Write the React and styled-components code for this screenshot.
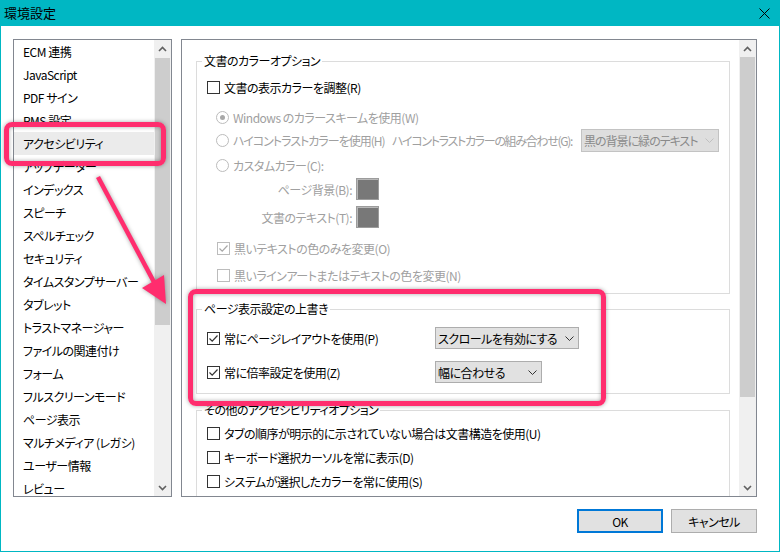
import React from 'react';
import styled, { createGlobalStyle } from 'styled-components';

const GlobalStyle = createGlobalStyle`
  html, body { margin: 0; padding: 0; background: #fff; }
  body {
    font-family: "Noto Sans CJK JP", "Noto Sans", sans-serif;
    font-size: 12px;
    font-feature-settings: "palt";
    letter-spacing: -0.5px;
    color: #000;
  }
  * { box-sizing: border-box; }
`;

const categories = [
  'ECM 連携', 'JavaScript', 'PDF サイン', 'RMS 設定', 'アクセシビリティ',
  'アップデーター', 'インデックス', 'スピーチ', 'スペルチェック', 'セキュリティ',
  'タイムスタンプサーバー', 'タブレット', 'トラストマネージャー', 'ファイルの関連付け',
  'フォーム', 'フルスクリーンモード', 'ページ表示', 'マルチメディア (レガシ)',
  'ユーザー情報', 'レビュー',
];

const Window = styled.div`
  position: relative;
  width: 780px;
  height: 552px;
  border: 1px solid #00b7c3;
  border-top: none;
  background: #fff;
  display: flex;
  flex-direction: column;
  overflow: hidden;
`;

const TitleBar = styled.div`
  height: 26px;
  flex: none;
  background: #00b7c3;
  display: flex;
  align-items: center;
  justify-content: space-between;
  padding: 0 9px 0 3px;
`;

const Title = styled.span`
  font-size: 13px;
  line-height: 16px;
  letter-spacing: 0;
  font-feature-settings: normal;
`;

const Body = styled.div`
  flex: 1;
  display: flex;
  flex-direction: column;
  padding: 13px 22px 0 12px;
`;

const Main = styled.div`
  display: flex;
  gap: 9px;
  height: 458px;
`;

const ListBox = styled.div`
  width: 159px;
  flex: none;
  border: 1px solid #828790;
  display: flex;
`;

const ListItems = styled.div`
  flex: 1;
  overflow: hidden;
`;

const ListItem = styled.div`
  height: 23px;
  line-height: 23px;
  padding-left: 9px;
  white-space: nowrap;
  background: ${p => (p.$selected ? '#ebebeb' : 'transparent')};
`;

const Track = styled.div`
  width: 17px;
  flex: none;
  background: #f0f0f0;
  display: flex;
  flex-direction: column;
`;

const ArrowButton = styled.div`
  height: 17px;
  flex: none;
  display: flex;
  align-items: center;
  justify-content: center;
`;

const Thumb = styled.div`
  margin: ${p => p.$offset}px 1px 0;
  height: ${p => p.$size}px;
  background: #cdcdcd;
  flex: none;
`;

const Spacer = styled.div`
  flex: 1;
`;

const Panel = styled.div`
  flex: 1;
  min-width: 0;
  border: 1px solid #828790;
  display: flex;
`;

const PanelContent = styled.div`
  flex: 1;
  min-width: 0;
  overflow: hidden;
  padding: 13px 9px 0 14px;
  display: flex;
  flex-direction: column;
`;

const Group = styled.fieldset`
  margin: ${p => p.$gap || 0}px 0 0;
  border: 1px solid #dcdcdc;
  padding: ${p => p.$pad};
  min-width: 0;
  flex: none;
`;

const Legend = styled.legend`
  font-size: 12px;
  line-height: 16px;
  padding: 0 2px;
  margin-left: -5px;
`;

const Row = styled.div`
  display: flex;
  align-items: center;
  gap: 4px;
  height: 22px;
  margin-top: ${p => p.$mt || 0}px;
  padding-left: ${p => p.$indent || 0}px;
  color: ${p => (p.$disabled ? '#a0a0a0' : '#000')};
  letter-spacing: ${p => (p.$tight ? '-1px' : 'inherit')};
  white-space: nowrap;
`;

const OverrideRow = styled.div`
  display: grid;
  grid-template-columns: 228px auto;
  align-items: center;
  height: 22px;
  margin-top: ${p => p.$mt || 0}px;
  white-space: nowrap;
`;

const Option = styled.span`
  display: flex;
  align-items: center;
  gap: 4px;
  width: ${p => (p.$width ? `${p.$width}px` : 'auto')};
  flex: none;
`;

const ComboLabel = styled.span`
  flex: none;
  letter-spacing: -1.3px;
`;

const Box = styled.span`
  width: 13px;
  height: 13px;
  flex: none;
  border: 1px solid ${p => (p.$disabled ? '#bcbcbc' : '#333')};
  border-radius: ${p => (p.$round ? '50%' : '0')};
  background: #fff;
  display: flex;
  align-items: center;
  justify-content: center;
`;

const Dot = styled.span`
  width: 5px;
  height: 5px;
  border-radius: 50%;
  background: #a8a8a8;
`;

const SwatchLabel = styled.span`
  width: 145px;
  text-align: right;
`;

const Swatch = styled.span`
  width: 23px;
  height: 22px;
  flex: none;
  background: #787878;
  border: 1px solid #9c9c9c;
  box-shadow: inset 1px 1px 0 #b8b8b8;
`;

const SelectBox = styled.div`
  width: ${p => p.$width}px;
  height: ${p => p.$height || 22}px;
  margin-left: ${p => (p.$push ? 'auto' : '0')};
  background: ${p => (p.$disabled ? '#dedede' : '#e1e1e1')};
  border: 1px solid ${p => (p.$disabled ? '#c3c3c3' : '#adadad')};
  color: ${p => (p.$disabled ? '#8a8a8a' : '#000')};
  display: flex;
  align-items: center;
  justify-content: space-between;
  gap: 4px;
  padding: 0 4px 0 2px;
  flex: none;
  overflow: hidden;
`;

const SelectValue = styled.span`
  overflow: hidden;
  white-space: nowrap;
`;

const Footer = styled.div`
  display: flex;
  justify-content: flex-end;
  gap: 8px;
  margin-top: 12px;
`;

const Button = styled.button`
  width: 86px;
  height: 24px;
  background: #e1e1e1;
  border: ${p => (p.$primary ? '2px solid #0078d7' : '1px solid #adadad')};
  font-family: inherit;
  font-size: 12px;
  font-feature-settings: "palt";
  letter-spacing: -0.5px;
  color: #000;
  padding: 0;
`;

const Overlay = styled.div`
  position: absolute;
  inset: 0;
  pointer-events: none;
`;

const Highlight = styled.div`
  position: absolute;
  left: ${p => p.$x}px;
  top: ${p => p.$y}px;
  width: ${p => p.$w}px;
  height: ${p => p.$h}px;
  border: 5px solid #ff2d6e;
  border-radius: 8px;
  box-shadow: 0 0 4px rgba(0, 0, 0, 0.35), inset 0 0 4px rgba(0, 0, 0, 0.35);
`;

const ArrowSvg = styled.svg`
  position: absolute;
  left: 0;
  top: 0;
  filter: drop-shadow(0 0 2px rgba(0, 0, 0, 0.35));
`;

const Chevron = ({ up, color = '#606060' }) => (
  <svg width="9" height="6" viewBox="0 0 9 6">
    <path
      d={up ? 'M1 5 L4.5 1.5 L8 5' : 'M1 1 L4.5 4.5 L8 1'}
      fill="none"
      stroke={color}
      strokeWidth="1.6"
    />
  </svg>
);

const DropChevron = ({ color = '#333' }) => (
  <svg width="9" height="5" viewBox="0 0 9 5" style={{ flex: 'none' }}>
    <path d="M0.5 0.5 L4.5 4.5 L8.5 0.5" fill="none" stroke={color} strokeWidth="1" />
  </svg>
);

const Scrollbar = ({ offset, size }) => (
  <Track>
    <ArrowButton><Chevron up /></ArrowButton>
    <Thumb $offset={offset} $size={size} />
    <Spacer />
    <ArrowButton><Chevron /></ArrowButton>
  </Track>
);

const Checkbox = ({ checked, disabled }) => (
  <Box $disabled={disabled}>
    {checked && (
      <svg width="11" height="11" viewBox="0 0 11 11">
        <path
          d="M1.5 5.5 L4.2 8.2 L9.5 2.5"
          fill="none"
          stroke={disabled ? '#a8a8a8' : '#333'}
          strokeWidth="1.2"
        />
      </svg>
    )}
  </Box>
);

const Radio = ({ selected }) => (
  <Box $round $disabled>
    {selected && <Dot />}
  </Box>
);

const Select = ({ value, width, height, disabled, push }) => (
  <SelectBox $width={width} $height={height} $disabled={disabled} $push={push}>
    <SelectValue>{value}</SelectValue>
    <DropChevron color={disabled ? '#c0c0c0' : '#333'} />
  </SelectBox>
);

export default function App() {
  return (
    <>
      <GlobalStyle />
      <Window>
        <TitleBar>
          <Title>環境設定</Title>
          <svg width="11" height="11" viewBox="0 0 11 11">
            <path d="M0.5 0.5 L10.5 10.5 M10.5 0.5 L0.5 10.5" stroke="#000" strokeWidth="1" />
          </svg>
        </TitleBar>
        <Body>
          <Main>
            <ListBox>
              <ListItems>
                {categories.map(c => (
                  <ListItem key={c} $selected={c === 'アクセシビリティ'}>{c}</ListItem>
                ))}
              </ListItems>
              <Scrollbar offset={1} size={267} />
            </ListBox>

            <Panel>
              <PanelContent>
                <Group $pad="7px 10px 7px 10px">
                  <Legend>文書のカラーオプション</Legend>
                  <Row>
                    <Checkbox />
                    <span>文書の表示カラーを調整(R)</span>
                  </Row>
                  <Row $mt={8} $indent={9} $disabled>
                    <Radio selected />
                    <span>Windows のカラースキームを使用(W)</span>
                  </Row>
                  <Row $mt={1} $indent={9} $disabled $tight>
                    <Option $width={172}>
                      <Radio />
                      <span>ハイコントラストカラーを使用(H)</span>
                    </Option>
                    <ComboLabel>ハイコントラストカラーの組み合わせ(G):</ComboLabel>
                    <Select value="黒の背景に緑のテキスト" width={138} height={23} disabled push />
                  </Row>
                  <Row $mt={3} $indent={9} $disabled>
                    <Radio />
                    <span>カスタムカラー(C):</span>
                  </Row>
                  <Row $mt={2} $disabled>
                    <SwatchLabel>ページ背景(B):</SwatchLabel>
                    <Swatch />
                  </Row>
                  <Row $mt={6} $disabled>
                    <SwatchLabel>文書のテキスト(T):</SwatchLabel>
                    <Swatch />
                  </Row>
                  <Row $mt={9} $indent={10} $disabled>
                    <Checkbox checked disabled />
                    <span>黒いテキストの色のみを変更(O)</span>
                  </Row>
                  <Row $mt={5} $indent={10} $disabled>
                    <Checkbox disabled />
                    <span>黒いラインアートまたはテキストの色を変更(N)</span>
                  </Row>
                </Group>

                <Group $gap={7} $pad="10px 10px 10px 10px">
                  <Legend>ページ表示設定の上書き</Legend>
                  <OverrideRow>
                    <Option>
                      <Checkbox checked />
                      <span>常にページレイアウトを使用(P)</span>
                    </Option>
                    <Select value="スクロールを有効にする" width={144} />
                  </OverrideRow>
                  <OverrideRow $mt={12}>
                    <Option>
                      <Checkbox checked />
                      <span>常に倍率設定を使用(Z)</span>
                    </Option>
                    <Select value="幅に合わせる" width={107} />
                  </OverrideRow>
                </Group>

                <Group $gap={8} $pad="4px 10px 30px 10px">
                  <Legend>その他のアクセシビリティオプション</Legend>
                  <Row>
                    <Checkbox />
                    <span>タブの順序が明示的に示されていない場合は文書構造を使用(U)</span>
                  </Row>
                  <Row $mt={2}>
                    <Checkbox />
                    <span>キーボード選択カーソルを常に表示(D)</span>
                  </Row>
                  <Row $mt={2}>
                    <Checkbox />
                    <span>システムが選択したカラーを常に使用(S)</span>
                  </Row>
                </Group>
              </PanelContent>
              <Scrollbar offset={0} size={340} />
            </Panel>
          </Main>

          <Footer>
            <Button $primary>OK</Button>
            <Button>キャンセル</Button>
          </Footer>
        </Body>

        <Overlay>
          <Highlight $x={3} $y={122} $w={162} $h={44} />
          <Highlight $x={187} $y={289} $w={418} $h={117} />
          <ArrowSvg width="780" height="552" viewBox="0 0 780 552">
            <line x1="97" y1="177" x2="154" y2="284" stroke="#ff2d6e" strokeWidth="4.5" />
            <polygon points="141,288 163,275 165,304" fill="#ff2d6e" />
          </ArrowSvg>
        </Overlay>
      </Window>
    </>
  );
}
